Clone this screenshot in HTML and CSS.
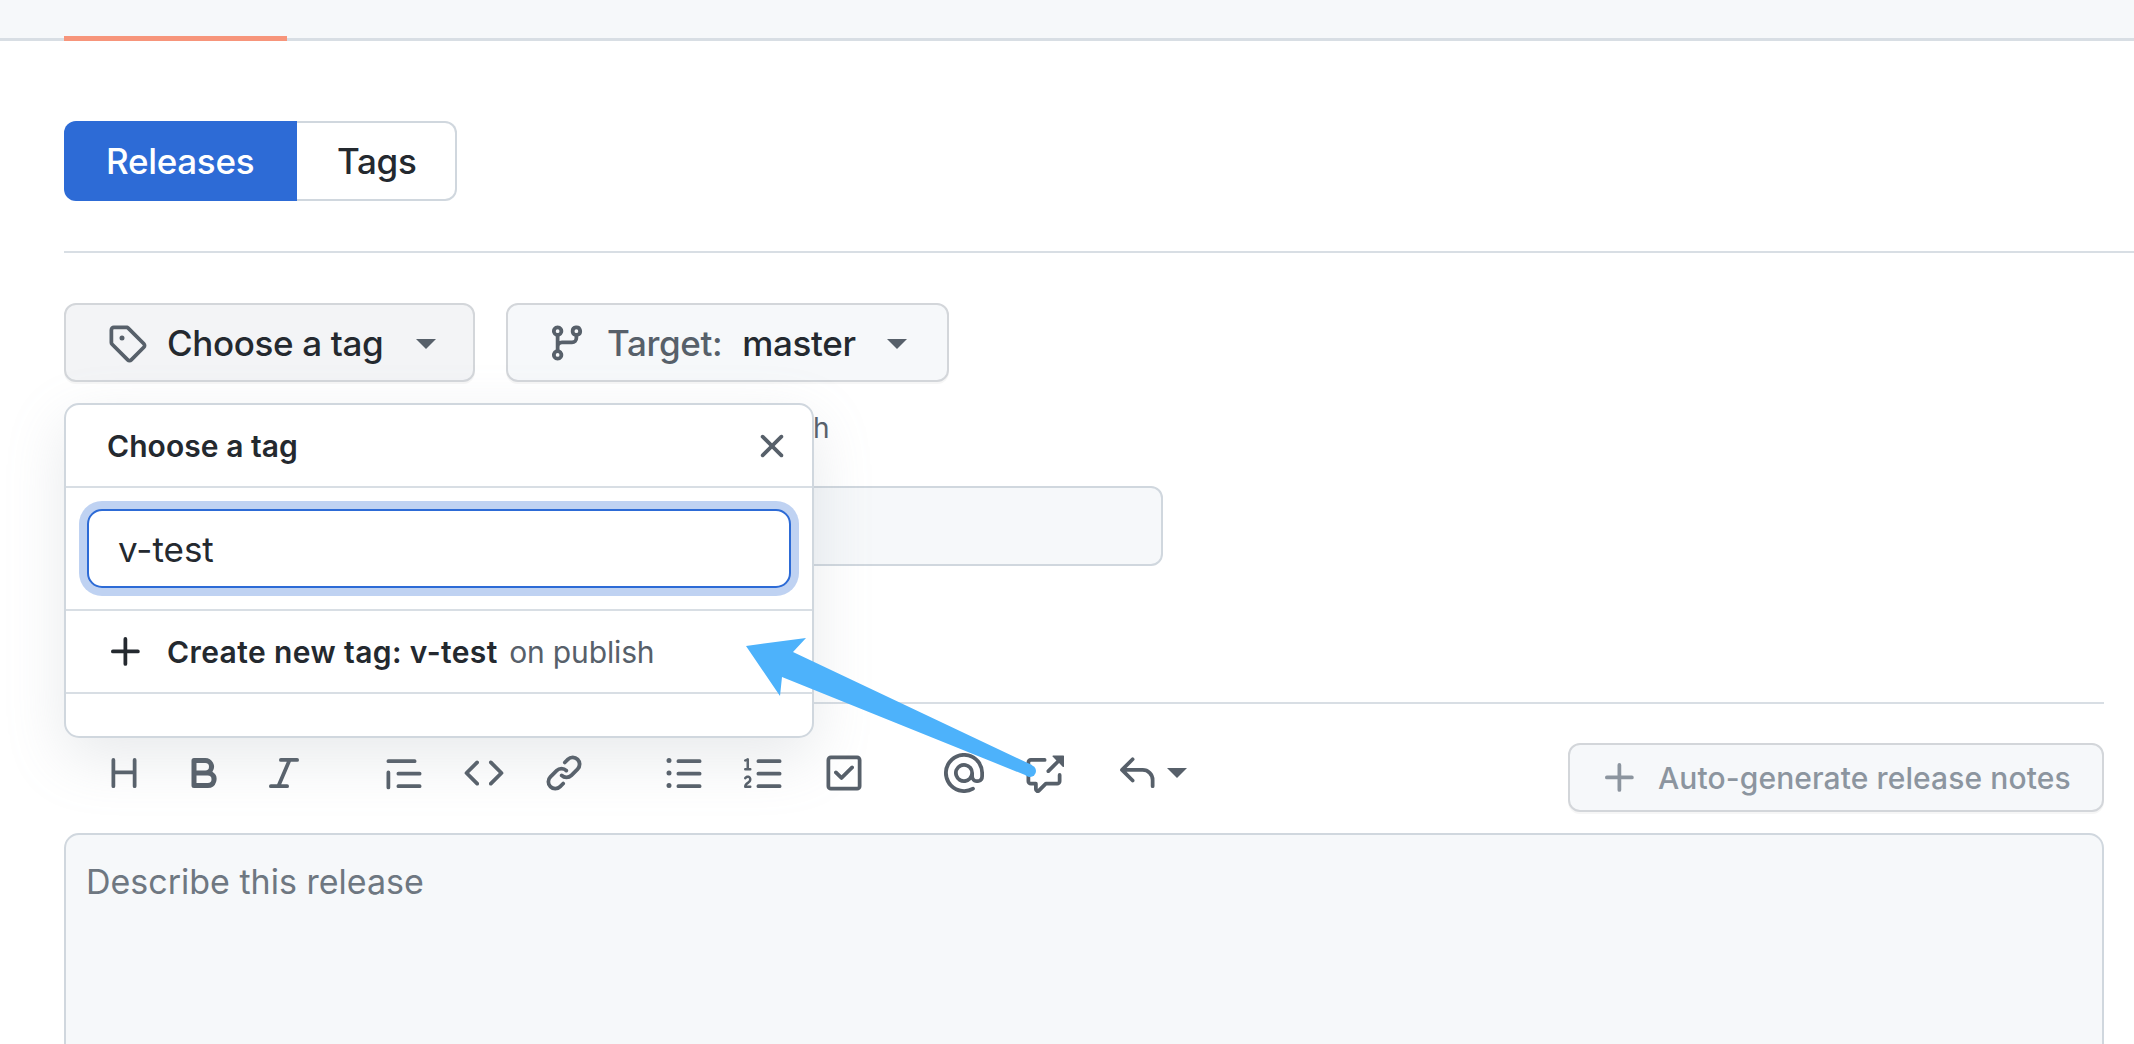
FILE: index.html
```html
<!DOCTYPE html>
<html lang="en">
<head>
<meta charset="utf-8">
<title>New release</title>
<link rel="stylesheet" href="styles.css">
</head>
<body>
<header class="topbar"><span class="tab-underline"></span></header>
<main class="content">
  <nav class="segmented">
    <a class="seg seg-active">Releases</a>
    <a class="seg seg-plain">Tags</a>
  </nav>
  <hr class="rule rule-bleed">
  <div class="pickers">
    <div class="tag-select">
      <button class="btn btn-tag">
        <svg class="icon muted" viewBox="0 0 16 16"><path d="M1 7.775V2.75C1 1.784 1.784 1 2.75 1h5.025c.464 0 .91.184 1.238.513l6.25 6.25a1.75 1.75 0 0 1 0 2.474l-5.026 5.026a1.75 1.75 0 0 1-2.474 0l-6.25-6.25A1.752 1.752 0 0 1 1 7.775Zm1.5 0c0 .066.026.13.073.177l6.25 6.25a.25.25 0 0 0 .354 0l5.025-5.025a.25.25 0 0 0 0-.354l-6.25-6.25a.25.25 0 0 0-.177-.073H2.75a.25.25 0 0 0-.25.25ZM6 5a1 1 0 1 1 0 2 1 1 0 0 1 0-2Z"/></svg>
        <span class="btn-label">Choose a tag</span>
        <span class="caret"></span>
      </button>
      <section class="popup">
        <div class="popup-head">
          <span class="popup-title">Choose a tag</span>
          <svg class="icon muted" viewBox="0 0 16 16"><path d="M3.72 3.72a.75.75 0 0 1 1.06 0L8 6.94l3.22-3.22a.749.749 0 0 1 1.275.326.749.749 0 0 1-.215.734L9.06 8l3.22 3.22a.749.749 0 0 1-.326 1.275.749.749 0 0 1-.734-.215L8 9.06l-3.22 3.22a.751.751 0 0 1-1.042-.018.751.751 0 0 1-.018-1.042L6.94 8 3.72 4.78a.75.75 0 0 1 0-1.06Z"/></svg>
        </div>
        <div class="popup-search"><input class="tag-input" type="text" value="v-test"></div>
        <div class="popup-row">
          <svg class="icon dark" viewBox="0 0 16 16"><path d="M7.75 2a.75.75 0 0 1 .75.75V7h4.25a.75.75 0 0 1 0 1.5H8.5v4.25a.75.75 0 0 1-1.5 0V8.5H2.75a.75.75 0 0 1 0-1.5H7V2.75A.75.75 0 0 1 7.75 2Z"/></svg>
          <span class="row-text"><b>Create new tag: v-test</b> <span class="row-muted">on publish</span></span>
        </div>
        <div class="popup-foot"></div>
      </section>
    </div>
    <button class="btn btn-target">
      <svg class="icon muted" viewBox="0 0 16 16"><path d="M9.5 3.25a2.25 2.25 0 1 1 3 2.122V6A2.5 2.5 0 0 1 10 8.5H6a1 1 0 0 0-1 1v1.128a2.251 2.251 0 1 1-1.5 0V5.372a2.25 2.25 0 1 1 1.5 0v1.836A2.493 2.493 0 0 1 6 7h4a1 1 0 0 0 1-1v-.628A2.25 2.25 0 0 1 9.5 3.25Zm-6 0a.75.75 0 1 0 1.5 0 .75.75 0 0 0-1.5 0Zm8.25-.75a.75.75 0 1 0 0 1.5.75.75 0 0 0 0-1.5ZM4.25 12a.75.75 0 1 0 0 1.5.75.75 0 0 0 0-1.5Z"/></svg>
      <span class="btn-label"><span class="label-muted">Target:</span><span class="label-branch">master</span></span>
      <span class="caret"></span>
    </button>
  </div>
  <p class="hint">h</p>
  <input class="title-input" type="text" aria-label="Release title">
  <hr class="rule rule-editor">
  <div class="editor-bar">
    <div class="tools">
      <div class="tool-group">
        <svg class="icon muted" viewBox="0 0 16 16"><path d="M3.75 2a.75.75 0 0 1 .75.75V7h7V2.75a.75.75 0 0 1 1.5 0v10.5a.75.75 0 0 1-1.5 0V8.5h-7v4.75a.75.75 0 0 1-1.5 0V2.75A.75.75 0 0 1 3.75 2Z"/></svg>
        <svg class="icon muted" viewBox="0 0 16 16"><path d="M4 2h4.5a3.501 3.501 0 0 1 2.852 5.53A3.499 3.499 0 0 1 9.5 14H4a1 1 0 0 1-1-1V3a1 1 0 0 1 1-1Zm1 7v3h4.5a1.5 1.5 0 0 0 0-3Zm3.5-2a1.5 1.5 0 0 0 0-3H5v3Z"/></svg>
        <svg class="icon muted" viewBox="0 0 16 16"><path d="M6 2.75A.75.75 0 0 1 6.75 2h6.5a.75.75 0 0 1 0 1.5h-2.505l-3.858 9H9.25a.75.75 0 0 1 0 1.5h-6.5a.75.75 0 0 1 0-1.5h2.505l3.858-9H6.75A.75.75 0 0 1 6 2.75Z"/></svg>
      </div>
      <div class="tool-group">
        <svg class="icon muted" viewBox="0 0 16 16"><path d="M1.75 2.5h10.5a.75.75 0 0 1 0 1.5H1.75a.75.75 0 0 1 0-1.5Zm4 5h8.5a.75.75 0 0 1 0 1.5h-8.5a.75.75 0 0 1 0-1.5Zm0 5h8.5a.75.75 0 0 1 0 1.5h-8.5a.75.75 0 0 1 0-1.5ZM2.5 7.75v6a.75.75 0 0 1-1.5 0v-6a.75.75 0 0 1 1.5 0Z"/></svg>
        <svg class="icon muted" viewBox="0 0 16 16"><path d="m11.28 3.22 4.25 4.25a.75.75 0 0 1 0 1.06l-4.25 4.25a.749.749 0 0 1-1.275-.326.749.749 0 0 1 .215-.734L13.94 8l-3.72-3.72a.749.749 0 0 1 .326-1.275.749.749 0 0 1 .734.215Zm-6.56 0a.751.751 0 0 1 1.042.018.751.751 0 0 1 .018 1.042L2.06 8l3.72 3.72a.749.749 0 0 1-.326 1.275.749.749 0 0 1-.734-.215L.47 8.53a.75.75 0 0 1 0-1.06Z"/></svg>
        <svg class="icon muted" viewBox="0 0 16 16"><path d="m7.775 3.275 1.25-1.25a3.5 3.5 0 1 1 4.95 4.95l-2.5 2.5a3.5 3.5 0 0 1-4.95 0 .751.751 0 0 1 .018-1.042.751.751 0 0 1 1.042-.018 1.998 1.998 0 0 0 2.83 0l2.5-2.5a2.002 2.002 0 0 0-2.83-2.83l-1.25 1.25a.751.751 0 0 1-1.042-.018.751.751 0 0 1-.018-1.042Zm-4.69 9.64a1.998 1.998 0 0 0 2.83 0l1.25-1.25a.751.751 0 0 1 1.042.018.751.751 0 0 1 .018 1.042l-1.25 1.25a3.5 3.5 0 1 1-4.95-4.95l2.5-2.5a3.5 3.5 0 0 1 4.95 0 .751.751 0 0 1-.018 1.042.751.751 0 0 1-1.042.018 1.998 1.998 0 0 0-2.83 0l-2.5 2.5a1.998 1.998 0 0 0 0 2.83Z"/></svg>
      </div>
      <div class="tool-group">
        <svg class="icon muted" viewBox="0 0 16 16"><path d="M5.75 2.5h8.5a.75.75 0 0 1 0 1.5h-8.5a.75.75 0 0 1 0-1.5Zm0 5h8.5a.75.75 0 0 1 0 1.5h-8.5a.75.75 0 0 1 0-1.5Zm0 5h8.5a.75.75 0 0 1 0 1.5h-8.5a.75.75 0 0 1 0-1.5ZM2 14a1 1 0 1 1 0-2 1 1 0 0 1 0 2Zm1-6a1 1 0 1 1-2 0 1 1 0 0 1 2 0ZM2 4a1 1 0 1 1 0-2 1 1 0 0 1 0 2Z"/></svg>
        <svg class="icon muted" viewBox="0 0 16 16"><path d="M5 3.25a.75.75 0 0 1 .75-.75h8.5a.75.75 0 0 1 0 1.5h-8.5A.75.75 0 0 1 5 3.25Zm0 5a.75.75 0 0 1 .75-.75h8.5a.75.75 0 0 1 0 1.5h-8.5A.75.75 0 0 1 5 8.25Zm0 5a.75.75 0 0 1 .75-.75h8.5a.75.75 0 0 1 0 1.5h-8.5a.75.75 0 0 1-.75-.75ZM.924 10.32a.5.5 0 0 1-.851-.525l.001-.001.001-.002.002-.004.007-.011c.097-.144.215-.273.348-.384.228-.19.588-.392 1.068-.392.468 0 .858.181 1.126.484.259.294.377.673.377 1.038 0 .987-.686 1.495-1.156 1.845l-.047.035c-.303.225-.522.4-.654.597h1.357a.5.5 0 0 1 0 1H.5a.5.5 0 0 1-.5-.5c0-1.005.692-1.52 1.167-1.875l.035-.025c.531-.396.8-.625.8-1.078a.57.57 0 0 0-.128-.376C1.806 10.068 1.695 10 1.5 10a.658.658 0 0 0-.429.163.835.835 0 0 0-.144.153ZM2.003 2.5V6h.503a.5.5 0 0 1 0 1H.5a.5.5 0 0 1 0-1h.503V3.308l-.28.14a.5.5 0 0 1-.446-.895l1.003-.5a.5.5 0 0 1 .723.447Z"/></svg>
        <svg class="icon muted" viewBox="0 0 16 16"><path d="M2.75 2.5a.25.25 0 0 0-.25.25v10.5c0 .138.112.25.25.25h10.5a.25.25 0 0 0 .25-.25V2.75a.25.25 0 0 0-.25-.25H2.75ZM1 2.75C1 1.784 1.784 1 2.75 1h10.5c.966 0 1.75.784 1.75 1.75v10.5A1.75 1.75 0 0 1 13.25 15H2.75A1.75 1.75 0 0 1 1 13.25V2.75Zm10.78 3.53a.75.75 0 0 0-1.06-1.06L7 8.94 5.28 7.22a.75.75 0 0 0-1.06 1.06l2.25 2.25a.75.75 0 0 0 1.06 0l4.25-4.25Z"/></svg>
      </div>
      <div class="tool-group">
        <svg class="icon muted" viewBox="0 0 16 16"><path d="M4.75 2.37a6.501 6.501 0 0 0 6.5 11.26.75.75 0 0 1 .75 1.298A7.999 7.999 0 0 1 .989 4.148 8 8 0 0 1 16 7.75v1.5a2.75 2.75 0 0 1-5.072 1.475 3.999 3.999 0 0 1-6.65-4.19A4 4 0 0 1 12 8v1.25a1.25 1.25 0 0 0 2.5 0V7.867a6.5 6.5 0 0 0-9.75-5.496ZM10.5 8a2.5 2.5 0 1 0-5 0 2.5 2.5 0 0 0 5 0Z"/></svg>
        <svg class="icon muted" viewBox="0 0 16 16"><path d="M2.75 3.5a.25.25 0 0 0-.25.25v7.5c0 .138.112.25.25.25h2a.75.75 0 0 1 .75.75v2.19l2.72-2.72a.749.749 0 0 1 .53-.22h4.5a.25.25 0 0 0 .25-.25v-2.5a.75.75 0 0 1 1.5 0v2.5A1.75 1.75 0 0 1 13.25 13H9.06l-2.573 2.573A1.458 1.458 0 0 1 4 14.543V13H2.75A1.75 1.75 0 0 1 1 11.25v-7.5C1 2.784 1.784 2 2.75 2h5.5a.75.75 0 0 1 0 1.5ZM16 1.25v4.146a.25.25 0 0 1-.427.177L14.03 4.03l-3.75 3.75a.749.749 0 0 1-1.275-.326.749.749 0 0 1 .215-.734l3.75-3.75-1.543-1.543A.25.25 0 0 1 11.604 1h4.146a.25.25 0 0 1 .25.25Z"/></svg>
      </div>
      <div class="reply-tool">
        <svg class="icon muted" viewBox="0 0 16 16"><path d="M6.78 1.97a.75.75 0 0 1 0 1.06L3.81 6h6.44A4.75 4.75 0 0 1 15 10.75v2.5a.75.75 0 0 1-1.5 0v-2.5a3.25 3.25 0 0 0-3.25-3.25H3.81l2.97 2.97a.749.749 0 0 1-.326 1.275.749.749 0 0 1-.734-.215L1.47 7.28a.75.75 0 0 1 0-1.06l4.25-4.25a.75.75 0 0 1 1.06 0Z"/></svg>
        <span class="caret"></span>
      </div>
    </div>
    <button class="btn-auto" disabled>
      <svg class="icon faint" viewBox="0 0 16 16"><path d="M7.75 2a.75.75 0 0 1 .75.75V7h4.25a.75.75 0 0 1 0 1.5H8.5v4.25a.75.75 0 0 1-1.5 0V8.5H2.75a.75.75 0 0 1 0-1.5H7V2.75A.75.75 0 0 1 7.75 2Z"/></svg>
      <span>Auto-generate release notes</span>
    </button>
  </div>
  <textarea class="body-input" placeholder="Describe this release"></textarea>
</main>
<svg class="annotation" viewBox="0 0 2134 1044" aria-hidden="true">
  <polygon points="746,646 806,638 793,652 1032,765 1030,777 782,677 780,696"/>
  <circle cx="1030" cy="771" r="6"/>
</svg>
</body>
</html>
```
FILE: styles.css
```css
* { box-sizing: border-box; }
html, body { margin: 0; height: 1044px; overflow: hidden; background: #fff; }
body { font-family: Inter, "Liberation Sans", sans-serif; color: #24292f; position: relative; }
.icon { width: 40px; height: 40px; flex: none; display: block; }
.muted { fill: #57606a; }
.dark { fill: #24292f; }
.faint { fill: #8c959f; }
.topbar { height: 41px; background: #f6f8fa; border-bottom: 3px solid #d8dee4; display: flex; align-items: flex-end; padding-left: 64px; }
.tab-underline { width: 223px; height: 5px; background: #f7957b; margin-bottom: -3px; }
.content { padding: 80px 30px 0 64px; }
.segmented { display: flex; width: 393px; height: 80px; }
.seg { display: flex; align-items: center; font-size: 35px; font-weight: 500; letter-spacing: -0.3px; }
.seg-active { width: 233px; padding-left: 42px; background: #2d6bd6; color: #fff; border-radius: 12px 0 0 12px; }
.seg-plain { width: 160px; padding-left: 40px; border: 2.5px solid #d0d7de; border-left: 0; border-radius: 0 12px 12px 0; }
.rule { border: 0; height: 2px; background: #d8dee4; margin: 0; }
.rule-bleed { margin: 50px -30px 50px 0; }
.pickers { display: flex; gap: 31px; height: 79px; position: relative; }
.tag-select { position: relative; }
.btn { height: 79px; display: flex; align-items: center; font: 500 35px Inter, "Liberation Sans", sans-serif; color: #24292f; letter-spacing: -0.35px; border: 2.5px solid #d3d6da; border-radius: 12px; box-shadow: 0 2px 0 rgba(27,31,36,.04); padding: 0; }
.btn-tag { width: 411px; padding-left: 41px; background: #f3f4f6; }
.btn-target { width: 443px; padding-left: 39px; background: #f6f8fa; }
.btn-label { margin-left: 20px; margin-top: 1px; white-space: nowrap; display: flex; gap: 20px; }
.label-muted { color: #57606a; }
.caret { width: 0; height: 0; border-left: 10px solid transparent; border-right: 10px solid transparent; border-top: 10px solid #57606a; flex: none; }
.btn .caret { margin-left: 31px; margin-top: 3px; }
.btn-tag .caret { margin-left: 33px; }
.popup { position: absolute; z-index: 2; left: 0; top: 100px; width: 750px; height: 335px; background: #fff; border: 2.5px solid #d0d7de; border-radius: 15px; box-shadow: 0 20px 60px rgba(140,149,159,.2); display: flex; flex-direction: column; }
.popup-head { height: 83px; flex: none; display: flex; align-items: center; justify-content: space-between; padding: 0 20px 0 41px; border-bottom: 2.5px solid #d8dee4; }
.popup-title { font-size: 30px; font-weight: 600; letter-spacing: 0.05px; }
.popup-search { height: 123px; flex: none; display: flex; align-items: center; padding: 0 21px; border-bottom: 2.5px solid #d8dee4; }
.tag-input { width: 100%; height: 79px; padding: 0 29px; border: 2.5px solid #2d6bd6; border-radius: 15px; outline: 0; box-shadow: 0 0 0 8px #bfd2f2; font: 400 35px Inter, "Liberation Sans", sans-serif; color: #24292f; }
.popup-row { height: 83px; flex: none; display: flex; align-items: center; gap: 21px; padding-left: 40px; border-bottom: 2.5px solid #d8dee4; font-size: 30px; }
.row-text b { font-weight: 600; letter-spacing: 0.4px; }
.row-muted { color: #57606a; margin-left: 3px; letter-spacing: -0.15px; }
.popup-foot { flex: 1; }
.hint { margin: 29px 0 0 749px; height: 35px; font-size: 28px; line-height: 35px; color: #57606a; white-space: nowrap; }
.title-input { display: block; margin: 40px 0 0; width: 1099px; height: 80px; background: #f6f8fa; border: 2.5px solid #d0d7de; border-radius: 12px; }
.rule-editor { margin: 136px 0 0; }
.editor-bar { display: flex; justify-content: space-between; margin-top: 39px; }
.tools { display: flex; gap: 80px; padding: 10px 0 0 40px; }
.tool-group { display: flex; gap: 40px; }
.reply-tool { display: flex; align-items: center; gap: 10px; height: 40px; margin-left: -27px; }
.btn-auto { width: 536px; height: 69px; display: flex; align-items: center; gap: 18px; padding: 0 0 0 30px; background: #f6f8fa; border: 2.5px solid #d3d6da; border-radius: 12px; box-shadow: 0 2px 0 rgba(27,31,36,.04); color: #8c959f; font: 500 30px Inter, "Liberation Sans", sans-serif; letter-spacing: 0.1px; white-space: nowrap; }
.body-input { display: block; margin: 21px 0 0; width: 100%; height: 400px; padding: 24px 20px 20px; background: #f6f8fa; border: 2.5px solid #d0d7de; border-radius: 15px; resize: none; outline: 0; font: 400 34px/46px Inter, "Liberation Sans", sans-serif; }
.body-input::placeholder { color: #6e7781; opacity: 1; }
.annotation { position: absolute; left: 0; top: 0; width: 2134px; height: 1044px; z-index: 3; pointer-events: none; fill: #4db2fb; }
```
